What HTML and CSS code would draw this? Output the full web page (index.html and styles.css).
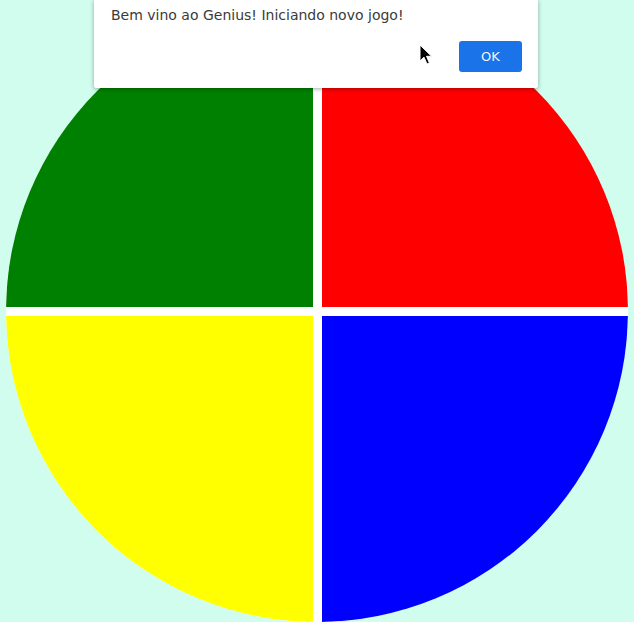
FILE: index.html
```html
<!DOCTYPE html>
<html lang="pt">
<head>
<meta charset="utf-8">
<title>Genius</title>
<link rel="stylesheet" href="styles.css">
</head>
<body>
  <main class="board">
    <div class="pad green"></div>
    <div class="pad red"></div>
    <div class="pad yellow"></div>
    <div class="pad blue"></div>
  </main>
  <div class="alert">
    <p class="alert-msg">Bem vino ao Genius! Iniciando novo jogo!</p>
    <div class="alert-actions">
      <button class="alert-ok">OK</button>
    </div>
  </div>
  <svg class="cursor" width="14" height="22" viewBox="0 0 14 22">
    <path d="M1 1 L1 17 L5 13.2 L8 20 L10.4 19 L7.5 12.3 L12.6 12.3 Z" fill="#000" stroke="#fff" stroke-width="1" stroke-linejoin="round"/>
  </svg>
</body>
</html>
```
FILE: styles.css
```css
html, body {
  margin: 0;
  padding: 0;
}
body {
  background: #d0fdee;
  height: 622px;
  overflow: hidden;
  display: flex;
  justify-content: center;
  font-family: "DejaVu Sans", sans-serif;
}
.board {
  width: 622px;
  height: 622px;
  border-radius: 50%;
  background: #fff;
  display: grid;
  grid-template-columns: 1fr 1fr;
  grid-template-rows: 1fr 1fr;
  gap: 9px;
  overflow: hidden;
}
.green { background: #008000; border-top-left-radius: 100%; }
.red { background: #ff0000; border-top-right-radius: 100%; }
.yellow { background: #ffff00; border-bottom-left-radius: 100%; }
.blue { background: #0000ff; border-bottom-right-radius: 100%; }
.alert {
  position: absolute;
  left: 94px;
  top: 0;
  width: 444px;
  height: 88px;
  box-sizing: border-box;
  background: #fff;
  box-shadow: 0 1px 4px rgba(0, 0, 0, 0.35);
  border-radius: 0 0 2px 2px;
  padding: 0 16px 0 17px;
}
.alert-msg {
  margin: 0;
  padding-top: 5px;
  font-size: 14px;
  line-height: 20px;
  color: #3a3a3a;
}
.alert-actions {
  display: flex;
  justify-content: flex-end;
  margin-top: 16px;
}
.alert-ok {
  width: 63px;
  height: 31px;
  border: none;
  border-radius: 3px;
  background: #1a73e8;
  color: #f2f6fd;
  font-family: "DejaVu Sans", sans-serif;
  font-size: 13px;
  padding: 0;
}
.cursor {
  position: absolute;
  left: 419px;
  top: 44px;
}
```
